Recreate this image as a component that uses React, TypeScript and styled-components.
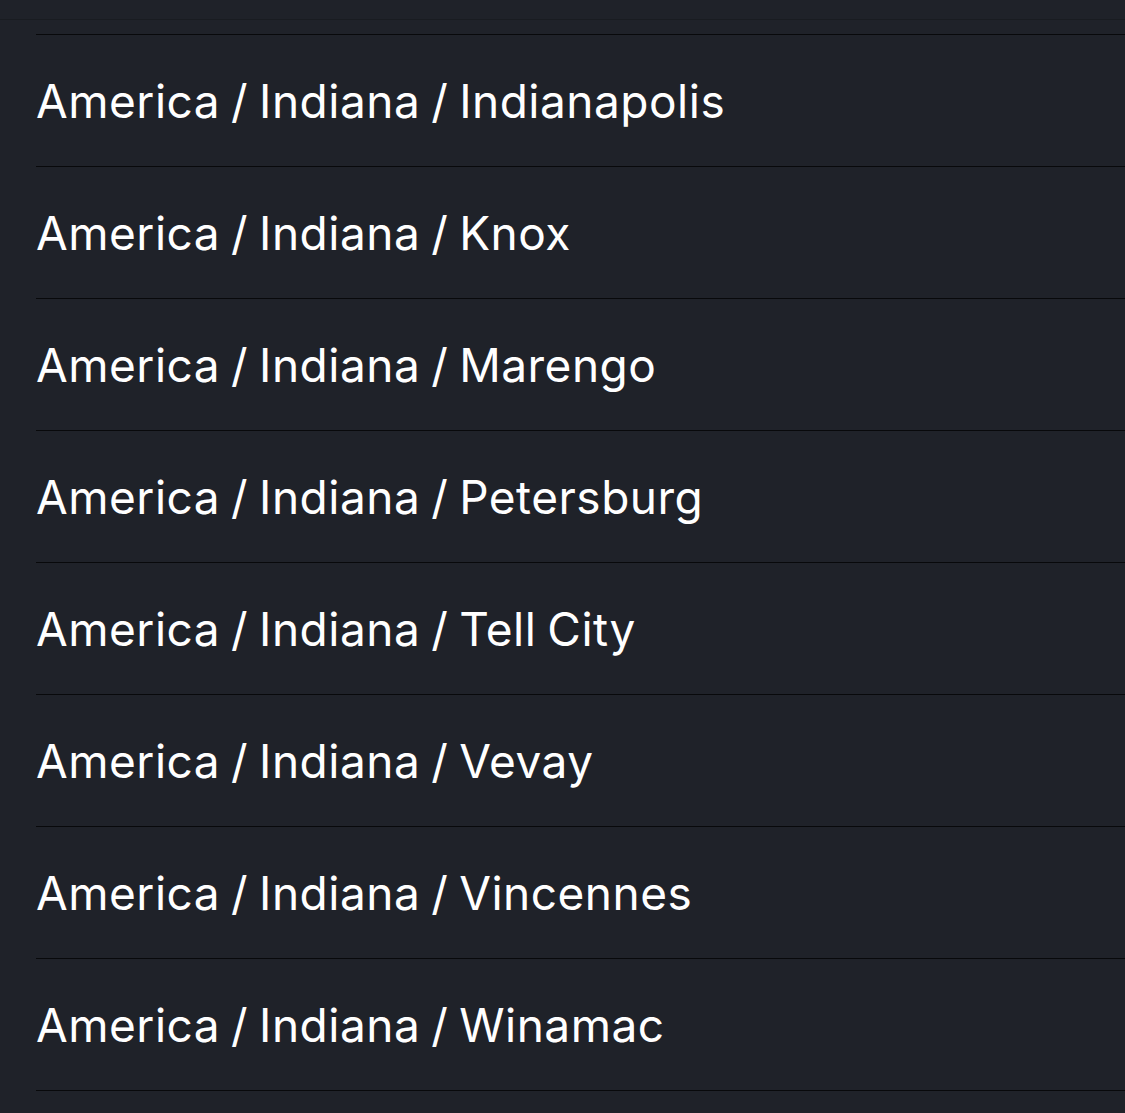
import React from 'react';
import styled, { createGlobalStyle } from 'styled-components';

const GlobalStyle = createGlobalStyle`
  html, body {
    margin: 0;
    padding: 0;
    background: #1f2229;
  }
  body {
    font-family: Inter, "Noto Sans", sans-serif;
    -webkit-font-smoothing: antialiased;
  }
`;

const Screen = styled.div`
  min-height: 1113px;
  background: #1f2229;
`;

const TopBar = styled.div`
  height: 19px;
  border-bottom: 1px solid #191c21;
`;

const Spacer = styled.div`
  height: 14px;
`;

const List = styled.ul`
  list-style: none;
  margin: 0 0 0 36px;
  padding: 0;
  border-top: 1px solid #08090b;
`;

const Row = styled.li`
  height: 131px;
  display: flex;
  align-items: center;
  border-bottom: 1px solid #08090b;
`;

const Label = styled.span`
  color: #ffffff;
  font-size: 46px;
  letter-spacing: 0.5px;
  word-spacing: -2.5px;
  white-space: nowrap;
`;

const zones = [
  'Indianapolis',
  'Knox',
  'Marengo',
  'Petersburg',
  'Tell City',
  'Vevay',
  'Vincennes',
  'Winamac',
];

const App: React.FC = () => {
  return (
    <>
      <GlobalStyle />
      <Screen>
        <TopBar />
        <Spacer />
        <List>
          {zones.map((city) => (
            <Row key={city}>
              <Label>America / Indiana / {city}</Label>
            </Row>
          ))}
        </List>
      </Screen>
    </>
  );
};

export default App;
